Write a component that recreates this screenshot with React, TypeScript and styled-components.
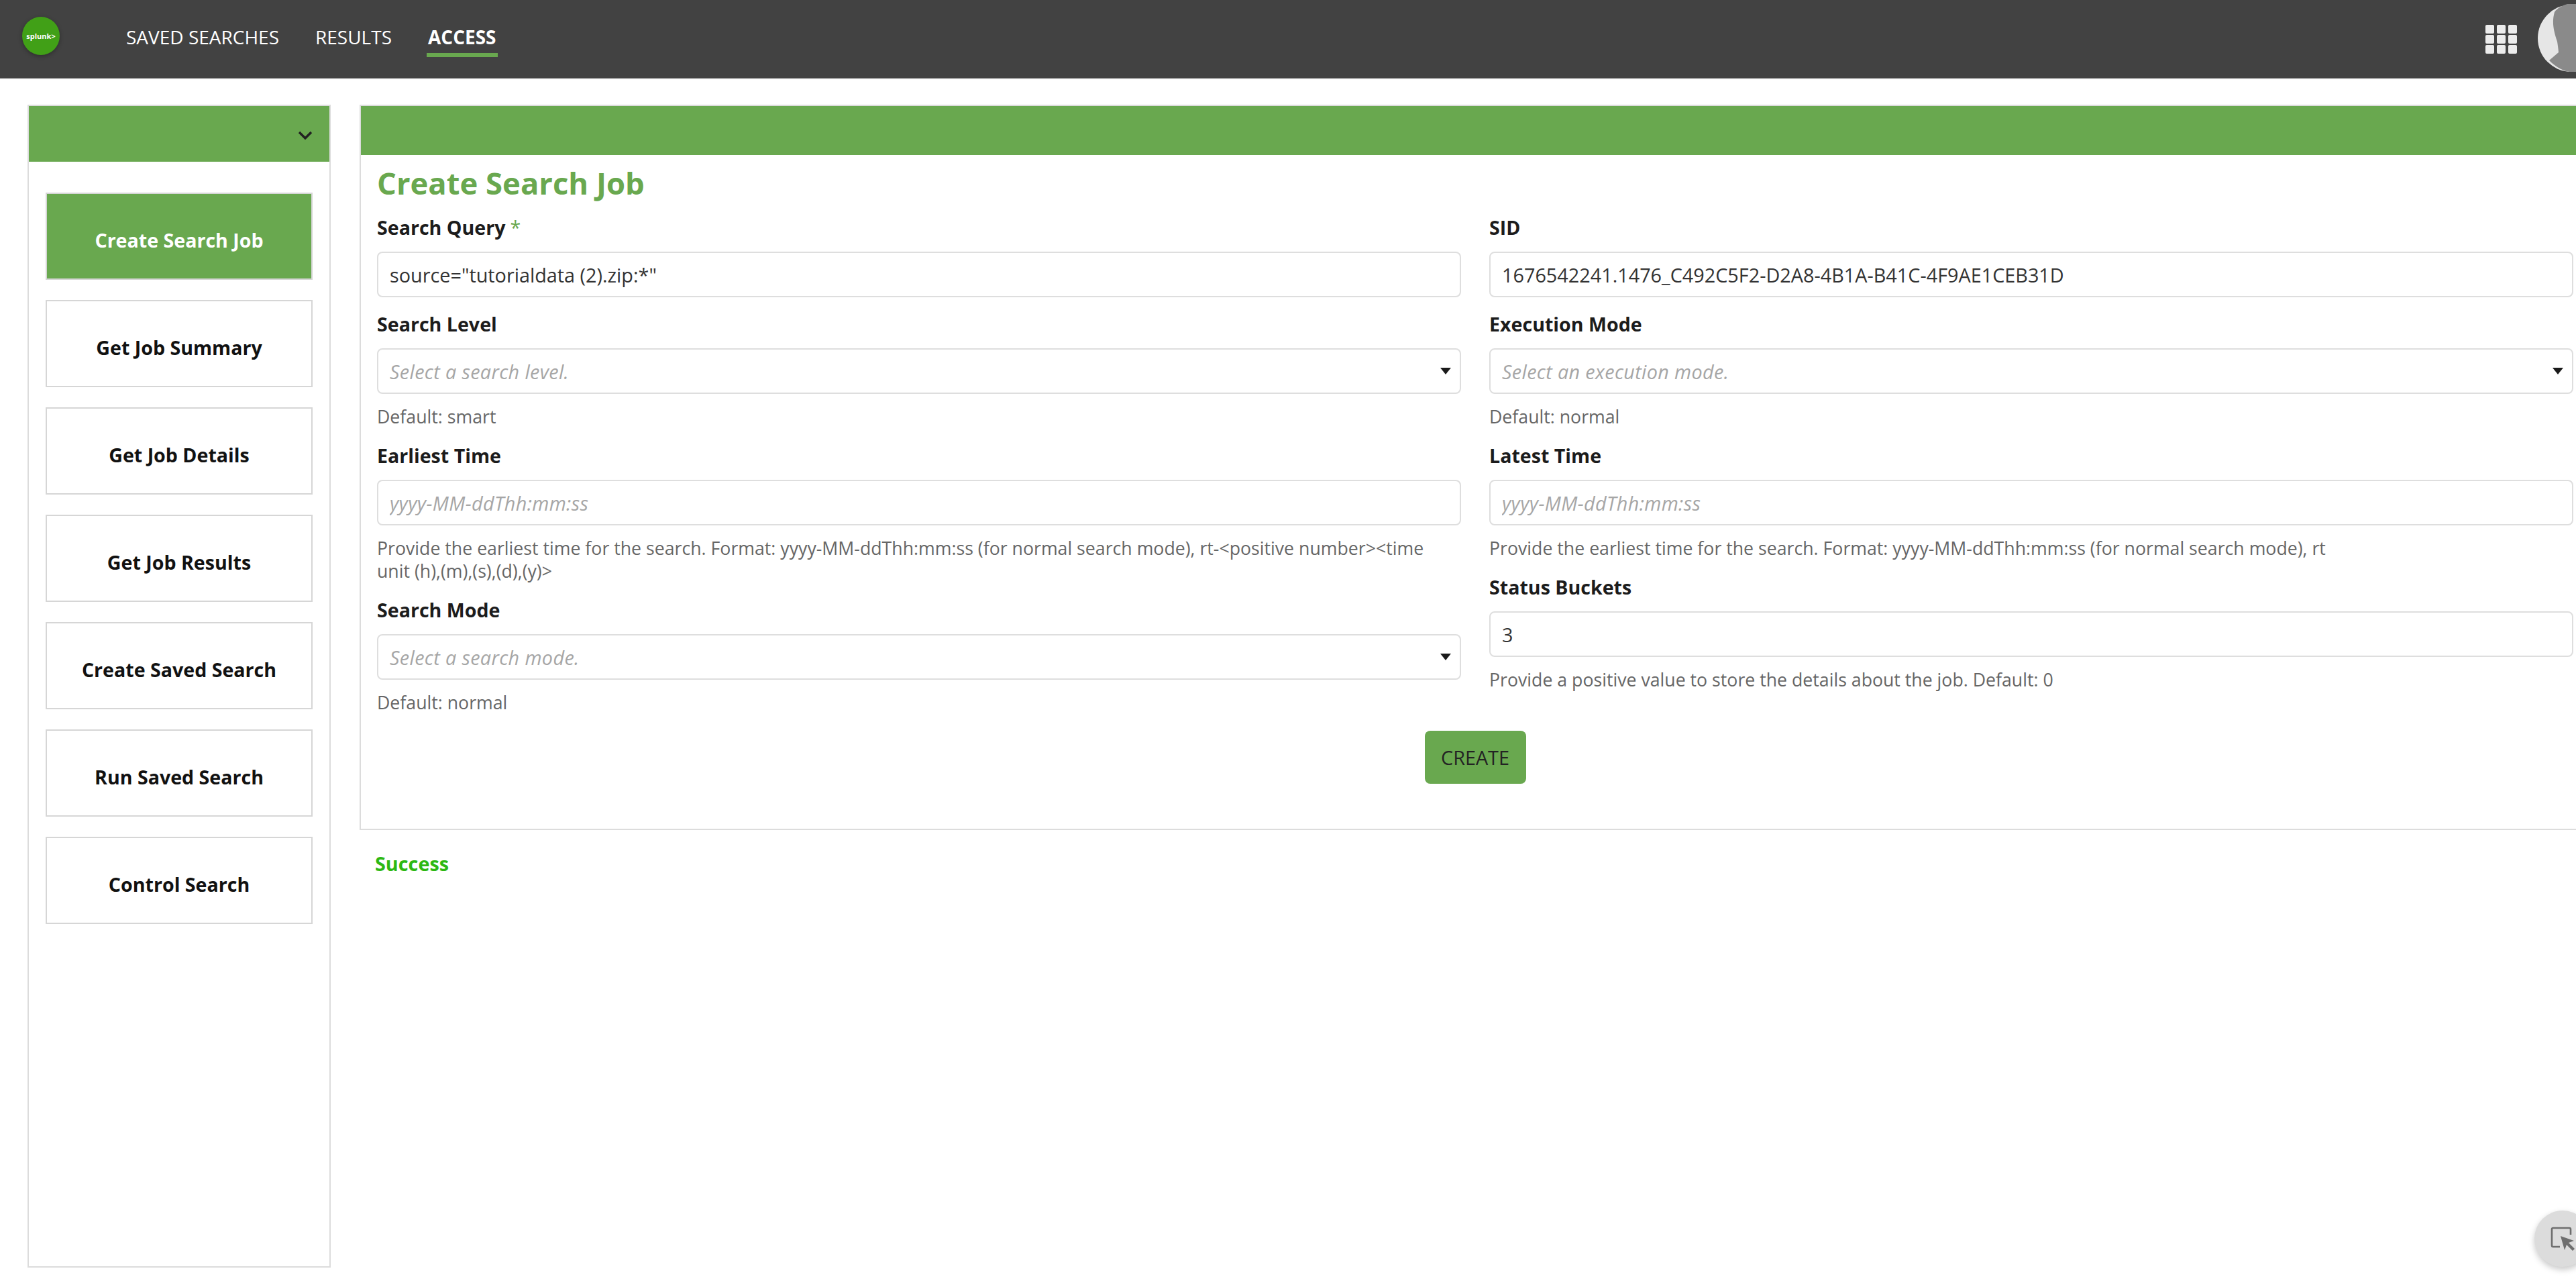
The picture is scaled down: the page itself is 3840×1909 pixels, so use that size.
import React from 'react';
import styled, { createGlobalStyle } from 'styled-components';

const GREEN = '#69a84f';

const GlobalStyle = createGlobalStyle`
  html, body {
    margin: 0;
    padding: 0;
    overflow: hidden;
    background: #fff;
  }
  * {
    box-sizing: border-box;
  }
`;

const Page = styled.div`
  width: 3840px;
  height: 1909px;
  overflow: hidden;
  position: relative;
  font-family: 'Open Sans', 'Liberation Sans', sans-serif;
  color: #222;
`;

const Header = styled.header`
  height: 118px;
  background: #424242;
  border-bottom: 2px solid #a8a8a8;
  display: flex;
  align-items: flex-start;
  padding-left: 33px;
  position: relative;
`;

const Logo = styled.div`
  width: 56px;
  height: 57px;
  margin-top: 25px;
  border-radius: 50%;
  background: #41a017;
  color: #fff;
  font-size: 11px;
  font-weight: 700;
  display: flex;
  align-items: center;
  justify-content: center;
  box-shadow: 0 2px 6px rgba(0, 0, 0, 0.3);
`;

const Nav = styled.nav`
  display: flex;
  gap: 50px;
  margin-left: 97px;
  margin-top: 35px;
`;

const NavItem = styled.a<{ $active?: boolean }>`
  display: block;
  height: 50px;
  padding: 0 2px;
  font-size: 28px;
  line-height: 40px;
  font-weight: ${p => (p.$active ? 700 : 400)};
  color: #fff;
  border-bottom: ${p => (p.$active ? `6px solid ${GREEN}` : 'none')};
`;

const HeaderRight = styled.div`
  margin-left: auto;
  display: flex;
  align-items: flex-start;
`;

const AppsGrid = styled.div`
  width: 47px;
  margin-top: 37px;
  margin-right: 88px;
  display: grid;
  grid-template-columns: repeat(3, 13px);
  grid-auto-rows: 13px;
  gap: 2px 3px;
  justify-content: space-between;
`;

const AppsDot = styled.span`
  background: #ececec;
  border-radius: 2px;
`;

const Avatar = styled.svg`
  position: absolute;
  left: 3782px;
  top: 6px;
  width: 102px;
  height: 102px;
`;

const Content = styled.div`
  display: flex;
  align-items: flex-start;
  gap: 43px;
  padding: 38px 0 0 41px;
  width: 3900px;
`;

const Sidebar = styled.aside`
  width: 452px;
  height: 1733px;
  flex-shrink: 0;
  border: 2px solid #dcdcdc;
`;

const SidebarHead = styled.div`
  height: 83px;
  background: ${GREEN};
  display: flex;
  align-items: center;
  justify-content: flex-end;
  padding: 4px 25px 0 0;
`;

const MenuList = styled.div`
  display: flex;
  flex-direction: column;
  gap: 30px;
  padding: 46px 25px 0;
`;

const MenuItem = styled.div<{ $active?: boolean }>`
  height: 130px;
  padding-top: 11px;
  display: flex;
  align-items: center;
  justify-content: center;
  border: 2px solid #d6d6d6;
  background: ${p => (p.$active ? GREEN : '#fff')};
  color: ${p => (p.$active ? '#fff' : '#111')};
  font-size: 28.6px;
  font-weight: 700;
`;

const MainColumn = styled.div`
  width: 3324px;
  flex-shrink: 0;
`;

const Panel = styled.main`
  border: 2px solid #dcdcdc;
  height: 1081px;
`;

const PanelHead = styled.div`
  height: 73px;
  background: ${GREEN};
`;

const PanelBody = styled.div`
  padding: 11px 22px 0 24px;
`;

const Title = styled.h1`
  margin: 0;
  font-size: 45.4px;
  line-height: 60px;
  font-weight: 700;
  color: ${GREEN};
`;

const FormGrid = styled.div`
  display: grid;
  grid-template-columns: 1616px 1616px;
  column-gap: 42px;
  margin-top: 17px;
`;

const FormColumn = styled.div`
  display: flex;
  flex-direction: column;
  gap: 20px;
`;

const Field = styled.div`
  display: flex;
  flex-direction: column;
`;

const Label = styled.label`
  font-size: 28.6px;
  line-height: 40px;
  font-weight: 700;
  color: #1c1c1c;
  margin-bottom: 16px;
`;

const Required = styled.span`
  color: ${GREEN};
  margin-left: 7px;
  font-weight: 400;
`;

const TextInput = styled.input`
  height: 68px;
  width: 100%;
  border: 2px solid #dedede;
  border-radius: 8px;
  padding: 0 17px;
  font-family: inherit;
  font-size: 28.8px;
  color: #333;
  outline: none;

  &::placeholder {
    color: #a6a6a6;
    font-style: italic;
    letter-spacing: 0.35px;
    opacity: 1;
  }
`;

const SelectBox = styled.div`
  height: 68px;
  border: 2px solid #dedede;
  border-radius: 8px;
  padding: 0 17px;
  display: flex;
  align-items: center;
  justify-content: space-between;
  font-size: 28.8px;
  font-style: italic;
  color: #a6a6a6;
  letter-spacing: 0.35px;
`;

const Caret = styled.span`
  width: 0;
  height: 0;
  border-left: 8.5px solid transparent;
  border-right: 8.5px solid transparent;
  border-top: 10px solid #1a1a1a;
  margin-right: -4px;
`;

const Hint = styled.div`
  margin: 17px 0 1px;
  font-size: 26.7px;
  line-height: 34px;
  color: #666;
`;

const ButtonRow = styled.div`
  display: flex;
  justify-content: center;
  margin-top: 24px;
`;

const CreateButton = styled.button`
  width: 151px;
  height: 79px;
  border: none;
  border-radius: 8px;
  background: ${GREEN};
  color: #232323;
  font-family: inherit;
  font-size: 28.8px;
`;

const Success = styled.div`
  margin: 30px 0 0 23px;
  font-size: 28.8px;
  line-height: 40px;
  font-weight: 700;
  color: #2cb812;
`;

const FloatButton = styled.div`
  position: absolute;
  left: 3778px;
  top: 1804px;
  width: 84px;
  height: 84px;
  border-radius: 50%;
  background: #dcdcdc;
  box-shadow: 0 4px 10px rgba(0, 0, 0, 0.22);
  display: flex;
  align-items: center;
  padding-left: 24px;
`;

const menuItems = [
  'Create Search Job',
  'Get Job Summary',
  'Get Job Details',
  'Get Job Results',
  'Create Saved Search',
  'Run Saved Search',
  'Control Search',
];

const timeHint =
  'Provide the earliest time for the search. Format: yyyy-MM-ddThh:mm:ss (for normal search mode), rt-<positive number><time unit (h),(m),(s),(d),(y)>';

const SelectField = ({ label, placeholder, hint }: { label: string; placeholder: string; hint: string }) => (
  <Field>
    <Label>{label}</Label>
    <SelectBox>
      {placeholder}
      <Caret />
    </SelectBox>
    <Hint>{hint}</Hint>
  </Field>
);

const App = () => {
  return (
    <Page>
      <GlobalStyle />
      <Header>
        <Logo>splunk&gt;</Logo>
        <Nav>
          <NavItem>SAVED SEARCHES</NavItem>
          <NavItem>RESULTS</NavItem>
          <NavItem $active>ACCESS</NavItem>
        </Nav>
        <HeaderRight>
          <AppsGrid>
            {Array.from({ length: 9 }).map((_, i) => (
              <AppsDot key={`dot-${i + 1}`} />
            ))}
          </AppsGrid>
        </HeaderRight>
        <Avatar viewBox="0 0 102 102">
          <circle cx="51" cy="51" r="50" fill="#e6e6e6" />
          <path
            d="M26 12 C22 26 24 38 30 56 C31 62 32 70 32 72 L18 84 C30 96 42 101 51 101 C70 101 90 94 102 70 L102 0 L45 0 C38 2 30 6 26 12 Z"
            fill="#8a8a8a"
          />
        </Avatar>
      </Header>
      <Content>
        <Sidebar>
          <SidebarHead>
            <svg width="22" height="13" viewBox="0 0 22 13" fill="none">
              <path d="M2 2 L11 11 L20 2" stroke="#222" strokeWidth="3.4" />
            </svg>
          </SidebarHead>
          <MenuList>
            {menuItems.map((item, i) => (
              <MenuItem key={item} $active={i === 0}>
                {item}
              </MenuItem>
            ))}
          </MenuList>
        </Sidebar>
        <MainColumn>
          <Panel>
            <PanelHead />
            <PanelBody>
              <Title>Create Search Job</Title>
              <FormGrid>
                <FormColumn>
                  <Field>
                    <Label>
                      Search Query<Required>*</Required>
                    </Label>
                    <TextInput readOnly value={'source="tutorialdata (2).zip:*"'} />
                  </Field>
                  <SelectField label="Search Level" placeholder="Select a search level." hint="Default: smart" />
                  <Field>
                    <Label>Earliest Time</Label>
                    <TextInput readOnly placeholder="yyyy-MM-ddThh:mm:ss" />
                    <Hint>{timeHint}</Hint>
                  </Field>
                  <SelectField label="Search Mode" placeholder="Select a search mode." hint="Default: normal" />
                </FormColumn>
                <FormColumn>
                  <Field>
                    <Label>SID</Label>
                    <TextInput readOnly value="1676542241.1476_C492C5F2-D2A8-4B1A-B41C-4F9AE1CEB31D" />
                  </Field>
                  <SelectField label="Execution Mode" placeholder="Select an execution mode." hint="Default: normal" />
                  <Field>
                    <Label>Latest Time</Label>
                    <TextInput readOnly placeholder="yyyy-MM-ddThh:mm:ss" />
                    <Hint>Provide the earliest time for the search. Format: yyyy-MM-ddThh:mm:ss (for normal search mode), rt</Hint>
                  </Field>
                  <Field>
                    <Label>Status Buckets</Label>
                    <TextInput readOnly value="3" />
                    <Hint>Provide a positive value to store the details about the job. Default: 0</Hint>
                  </Field>
                </FormColumn>
              </FormGrid>
              <ButtonRow>
                <CreateButton>CREATE</CreateButton>
              </ButtonRow>
            </PanelBody>
          </Panel>
          <Success>Success</Success>
        </MainColumn>
      </Content>
      <FloatButton>
        <svg width="36" height="36" viewBox="0 0 36 36" fill="none">
          <path d="M14 30 H4 Q2 30 2 28 V4 Q2 2 4 2 H28 Q30 2 30 4 V12" stroke="#6e6e6e" strokeWidth="2.6" />
          <path d="M15 14 L35 21 L27 24 L36 33 L33 36 L24 27 L21 35 Z" fill="#6e6e6e" />
        </svg>
      </FloatButton>
    </Page>
  );
};

export default App;
